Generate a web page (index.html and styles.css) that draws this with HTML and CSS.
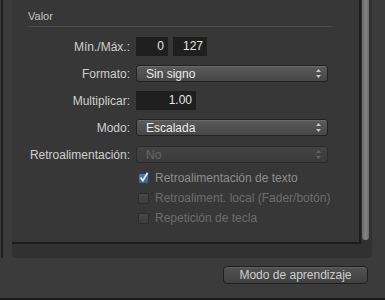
FILE: index.html
```html
<!DOCTYPE html>
<html lang="es">
  <head>
    <meta charset="UTF-8" />
    <title>Valor</title>
    <link rel="stylesheet" href="styles.css">
  </head>
  <body>
    <div class="window">
      <div class="top">
        <div class="edge"></div>
        <div class="panel">
          <div class="view">
            <div class="content">
              <div class="section-title">Valor</div>
              <div class="divider"></div>

              <div class="fields">
                <div class="row">
                  <span class="label">Mín./Máx.:</span>
                  <span class="field f-min">0</span>
                  <span class="field f-max">127</span>
                </div>
                <div class="row">
                  <span class="label">Formato:</span>
                  <div class="popup">
                    <span>Sin signo</span>
                    <svg class="arrows" width="5" height="9" viewBox="0 0 5 9"><path d="M2.5 0 L5 3 L0 3 Z M0 6 L5 6 L2.5 9 Z" /></svg>
                  </div>
                </div>
                <div class="row">
                  <span class="label">Multiplicar:</span>
                  <span class="field f-mult">1.00</span>
                </div>
                <div class="row">
                  <span class="label">Modo:</span>
                  <div class="popup">
                    <span>Escalada</span>
                    <svg class="arrows" width="5" height="9" viewBox="0 0 5 9"><path d="M2.5 0 L5 3 L0 3 Z M0 6 L5 6 L2.5 9 Z" /></svg>
                  </div>
                </div>
                <div class="row">
                  <span class="label">Retroalimentación:</span>
                  <div class="popup disabled">
                    <span>No</span>
                    <svg class="arrows" width="5" height="9" viewBox="0 0 5 9"><path d="M2.5 0 L5 3 L0 3 Z M0 6 L5 6 L2.5 9 Z" /></svg>
                  </div>
                </div>
              </div>

              <div class="checks">
                <div class="check on">
                  <span class="box">
                    <svg width="11" height="11" viewBox="0 0 11 11"><path d="M2.5 5.5 L4.8 8.6 L9.6 0.8" /></svg>
                  </span>
                  <span>Retroalimentación de texto</span>
                </div>
                <div class="check">
                  <span class="box"></span>
                  <span>Retroaliment. local (Fader/botón)</span>
                </div>
                <div class="check">
                  <span class="box"></span>
                  <span>Repetición de tecla</span>
                </div>
              </div>
            </div>
            <div class="scroller"><div class="thumb"></div></div>
          </div>
        </div>
      </div>
      <div class="footer">
        <button class="btn">Modo de aprendizaje</button>
      </div>
      <div class="bottom-line"></div>
    </div>
  </body>
</html>
```

FILE: styles.css
```css
/* Page */
body {
  margin: 0;
  background: #3b3b3b;
  font-family: "Liberation Sans", Arial, sans-serif;
  font-size: 12px;
  color: #cfcfcf;
}

.window {
  width: 385px;
  height: 300px;
  overflow: hidden;
  display: flex;
  flex-direction: column;
}

/* Upper area: left edge + inspector panel */
.top {
  display: flex;
  height: 258px;
}

.edge {
  width: 9px;
  margin-left: 1px;
  border-left: 2px solid #1e1e1e;
}

.panel {
  width: 360px;
  background: #313131;
  border-radius: 0 0 5px 5px;
}

.view {
  display: flex;
}

.content {
  width: 347px;
  height: 242px;
  background: #373737;
  border-right: 2px solid #1c1c1c;
  border-bottom: 2px solid #1c1c1c;
}

.scroller {
  width: 9px;
  padding-left: 1px;
}

.thumb {
  width: 7px;
  height: 240px;
  border-radius: 0 0 4px 4px;
  background: linear-gradient(to right, #666, #858585, #6a6a6a);
}

/* Section header */
.section-title {
  padding: 9px 0 0 16px;
  line-height: 14px;
  font-size: 11px;
  color: #c4c4c4;
}

.divider {
  height: 1px;
  margin: 3px 26px 0 16px;
  background: #4c4c4c;
}

/* Form rows */
.fields {
  display: flex;
  flex-direction: column;
  gap: 8px;
  margin-top: 10px;
}

.row {
  display: flex;
  align-items: center;
  height: 19px;
}

.label {
  width: 118px;
  margin-right: 6px;
  text-align: right;
}

.field {
  box-sizing: border-box;
  height: 19px;
  line-height: 19px;
  padding-right: 4px;
  text-align: right;
  background: #1f1f1f;
  color: #e6e6e6;
}

.f-min {
  width: 32px;
}

.f-max {
  width: 34px;
  margin-left: 5px;
}

.f-mult {
  width: 60px;
}

.popup {
  box-sizing: border-box;
  width: 192px;
  height: 17px;
  display: flex;
  align-items: center;
  justify-content: space-between;
  padding: 0 6px 0 9px;
  border: 1px solid #222;
  border-radius: 3px;
  background: linear-gradient(#5b5b5b, #464646);
  box-shadow: inset 0 1px 0 rgba(255, 255, 255, 0.1);
  color: #ececec;
}

.arrows {
  fill: #c8c8c8;
}

.popup.disabled {
  background: linear-gradient(#434343, #3b3b3b);
  border-color: #2b2b2b;
  box-shadow: none;
  color: #686868;
}

.popup.disabled .arrows {
  fill: #646464;
}

/* Checkboxes */
.checks {
  margin-top: 4px;
  padding-left: 126px;
}

.check {
  display: flex;
  align-items: center;
  gap: 6px;
  height: 20px;
  color: #6c6c6c;
}

.check.on {
  color: #8e8e8e;
}

.box {
  box-sizing: border-box;
  width: 11px;
  height: 11px;
  border: 1px solid #2c2c2c;
  border-radius: 2px;
  background: linear-gradient(#474747, #3d3d3d);
}

.check.on .box {
  border-color: #2d3f55;
  background: linear-gradient(#5578a2, #3f6088);
}

.box svg {
  display: block;
  margin: -2px 0 0 -1px;
  fill: none;
  stroke: #dfe9f5;
  stroke-width: 1.8;
}

/* Footer */
.footer {
  height: 40px;
  display: flex;
  justify-content: flex-end;
  align-items: flex-start;
  padding: 8px 17px 0 0;
  box-sizing: border-box;
}

.btn {
  width: 145px;
  height: 18px;
  padding: 0;
  border: 1px solid #1f1f1f;
  border-radius: 4px;
  background: linear-gradient(#525252, #404040);
  box-shadow: inset 0 1px 0 rgba(255, 255, 255, 0.08);
  font-family: "Liberation Sans", Arial, sans-serif;
  font-size: 12px;
  color: #cdcdcd;
}

.bottom-line {
  height: 2px;
  background: #1a1a1a;
}
```
